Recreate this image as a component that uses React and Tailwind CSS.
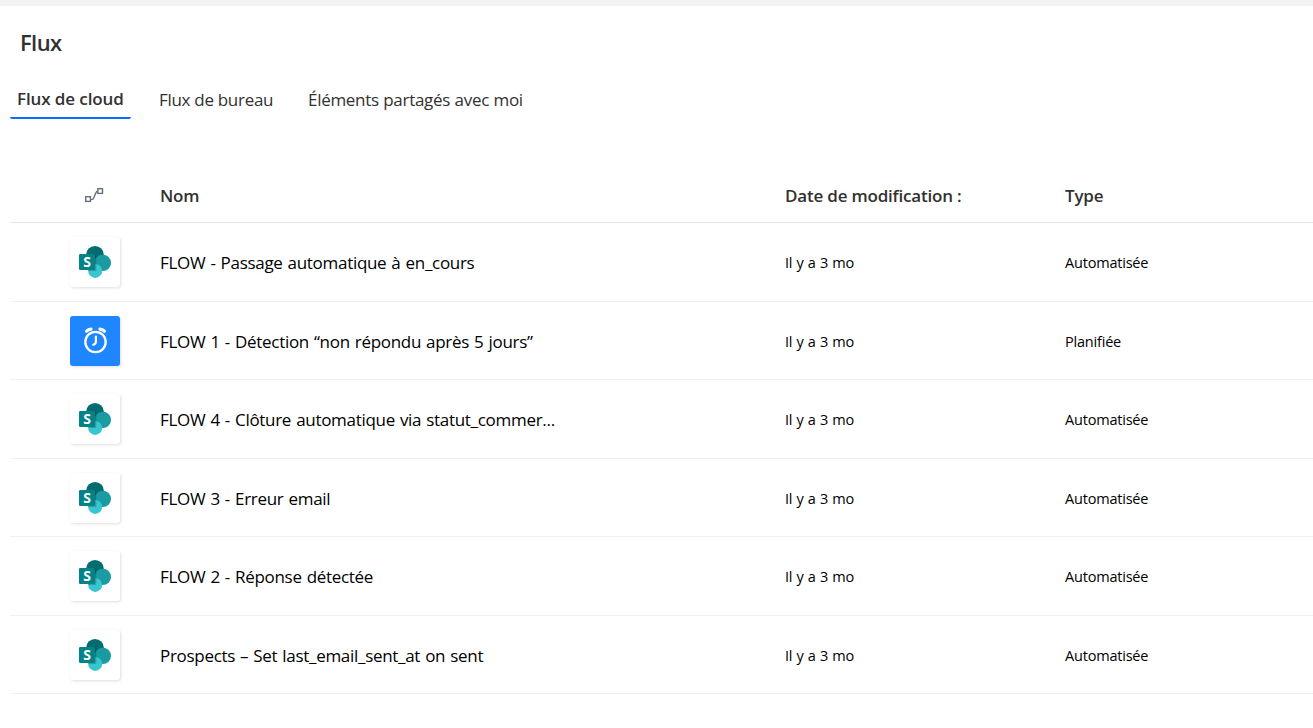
// src/App.jsx
import React from 'react';

const SHAREPOINT = 'sharepoint';
const SCHEDULE = 'schedule';

const tabs = [
  { label: 'Flux de bureau', className: 'ml-7 w-[114px]' },
  { label: 'Éléments partagés avec moi', className: 'ml-[35px] w-[220px] [word-spacing:0.4px]' },
];

const flows = [
  { name: 'FLOW - Passage automatique à en_cours', icon: SHAREPOINT, type: 'Automatisée' },
  { name: 'FLOW 1 - Détection “non répondu après 5 jours”', icon: SCHEDULE, type: 'Planifiée' },
  { name: 'FLOW 4 - Clôture automatique via statut_commer...', icon: SHAREPOINT, type: 'Automatisée' },
  { name: 'FLOW 3 - Erreur email', icon: SHAREPOINT, type: 'Automatisée' },
  { name: 'FLOW 2 - Réponse détectée', icon: SHAREPOINT, type: 'Automatisée' },
  { name: 'Prospects – Set last_email_sent_at on sent', icon: SHAREPOINT, type: 'Automatisée' },
];

const FlowIcon = () => (
  <svg width="19" height="15" viewBox="0 0 19 15" fill="none" stroke="#66717f" strokeWidth="1.4">
    <rect x="0.7" y="8.7" width="4.7" height="4.7" />
    <rect x="12.8" y="0.7" width="4.7" height="4.7" />
    <path d="M5.6 11.6h1.2c1 0 1.5-.5 1.9-1.5l2.2-5.4c.4-1 .9-1.5 1.8-1.5" />
  </svg>
);

const SharePointIcon = () => (
  <svg width="50" height="50" viewBox="0 0 50 50">
    <circle cx="25" cy="17.9" r="8.9" fill="#036c70" />
    <circle cx="32.8" cy="25.9" r="8.2" fill="#1a9ba1" />
    <circle cx="25.2" cy="33.9" r="7" fill="#37c6d0" />
    <path d="M16.2 17h8.6a1.5 1.5 0 0 1 1.5 1.5v15.4h-8a7 7 0 0 1-2.1-2z" fill="#000" opacity="0.2" />
    <rect x="9" y="17" width="16" height="16" rx="1.3" fill="#038387" />
    <text
      x="17"
      y="29.8"
      textAnchor="middle"
      fill="#fff"
      className="font-['Open_Sans',sans-serif] text-[14px] font-bold"
    >
      S
    </text>
  </svg>
);

const ClockIcon = () => (
  <svg width="50" height="50" viewBox="0 0 50 50" fill="none" stroke="#fff" strokeLinecap="round">
    <circle cx="25.5" cy="26" r="10.2" strokeWidth="2.3" />
    <path d="M25.9 20.5v5.2c0 1.5-1 2.6-2.7 3.1" strokeWidth="2.2" />
    <path d="M16.6 15.1c1.2-1.1 2.6-1.8 4.4-2" strokeWidth="3.2" />
    <path d="M34.4 15.1c-1.2-1.1-2.6-1.8-4.4-2" strokeWidth="3.2" />
  </svg>
);

const FlowRow = ({ flow }) => {
  const scheduled = flow.icon === SCHEDULE;

  return (
    <div className="flex h-[78.5px] items-center border-b border-[#f3f2f1] pt-px text-black">
      <div className="w-[150px] pl-[60px]">
        <div
          className={`h-[50px] w-[50px] overflow-hidden rounded-[3px] shadow-[1px_1px_3px_rgba(0,0,0,0.13)] ${
            scheduled ? 'bg-[#1e87ff]' : 'bg-white'
          }`}
        >
          {scheduled ? <ClockIcon /> : <SharePointIcon />}
        </div>
      </div>
      <div className="w-[625px] pt-px text-[17px] tracking-[-0.3px] [word-spacing:0.9px]">{flow.name}</div>
      <div className="w-[280px] pt-[2px] text-[14.5px] tracking-[-0.3px] [word-spacing:0.9px]">Il y a 3 mo</div>
      <div className="pt-[2px] text-[14.5px] tracking-[-0.2px]">{flow.type}</div>
    </div>
  );
};

const App = () => {
  return (
    <div className="h-screen overflow-hidden whitespace-nowrap border-t-[6px] border-[#f3f3f3] bg-white pl-[10px] font-['Open_Sans','Noto_Sans',sans-serif] text-[#323130]">
      <h1 className="pl-[10px] pt-5 text-[22px] font-semibold leading-8 tracking-[-0.6px]">Flux</h1>

      <nav className="mt-[22px] flex h-[39px] text-[17px] tracking-[-0.3px]">
        <div className="h-[39px] w-[121px] rounded-b-[2px] border-b-2 border-[#0f6cff] pl-[7px] font-semibold leading-[37px] tracking-[-0.15px] [word-spacing:0.2px]">
          Flux de cloud
        </div>
        {tabs.map((tab) => (
          <div key={tab.label} className={`leading-10 ${tab.className}`}>
            {tab.label}
          </div>
        ))}
      </nav>

      <div className="mt-[50px] flex h-[54px] items-center border-b border-[#e6e6e6] text-[17px] font-semibold tracking-[-0.2px]">
        <div className="w-[150px] pl-[75px]">
          <FlowIcon />
        </div>
        <div className="w-[625px]">Nom</div>
        <div className="w-[280px]">Date de modification :</div>
        <div>Type</div>
      </div>

      {flows.map((flow) => (
        <FlowRow key={flow.name} flow={flow} />
      ))}
    </div>
  );
};

export default App;
